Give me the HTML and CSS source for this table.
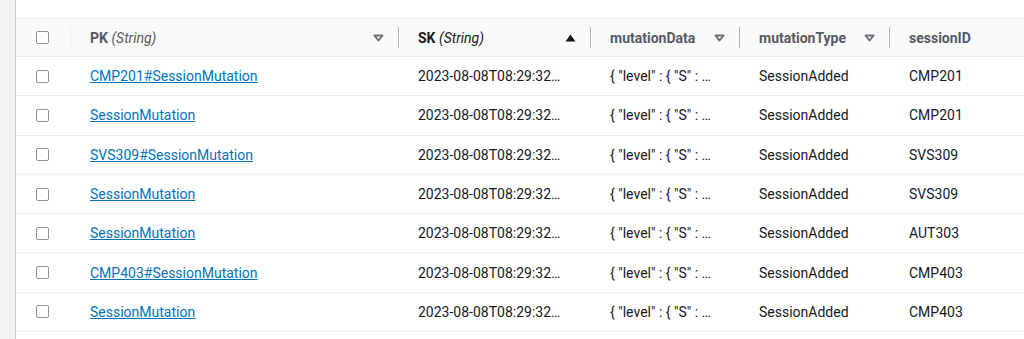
FILE: index.html
```html
<!DOCTYPE html>
<html lang="en">
<head>
  <meta charset="UTF-8">
  <title>Items returned</title>
  <link rel="stylesheet" href="styles.css">
</head>
<body>
  <div class="side"></div>
  <div class="main">
    <div class="topbar"></div>
    <table class="items">
      <colgroup>
        <col class="c-check">
        <col class="c-pk">
        <col class="c-sk">
        <col class="c-data">
        <col class="c-type">
        <col class="c-id">
      </colgroup>
      <thead>
        <tr>
          <th class="check"><span class="box"></span></th>
          <th>
            <div class="head">
              <span><b>PK</b> <i>(String)</i></span>
              <svg class="sort" width="11" height="8" viewBox="0 0 11 8"><path d="M1.5 1.5h8L5.5 6.5z" fill="none" stroke="#687078" stroke-width="2" stroke-linejoin="round"/></svg>
            </div>
          </th>
          <th class="sorted">
            <div class="head">
              <span><b>SK</b> <i>(String)</i></span>
              <svg class="sort" width="11" height="8" viewBox="0 0 11 8"><path d="M0.5 7.5h10L5.5 0.5z" fill="#16191f"/></svg>
            </div>
          </th>
          <th>
            <div class="head">
              <b>mutationData</b>
              <svg class="sort" width="11" height="8" viewBox="0 0 11 8"><path d="M1.5 1.5h8L5.5 6.5z" fill="none" stroke="#687078" stroke-width="2" stroke-linejoin="round"/></svg>
            </div>
          </th>
          <th>
            <div class="head">
              <b>mutationType</b>
              <svg class="sort" width="11" height="8" viewBox="0 0 11 8"><path d="M1.5 1.5h8L5.5 6.5z" fill="none" stroke="#687078" stroke-width="2" stroke-linejoin="round"/></svg>
            </div>
          </th>
          <th>
            <div class="head"><b>sessionID</b></div>
          </th>
        </tr>
      </thead>
      <tbody>
        <tr>
          <td class="check"><span class="box"></span></td>
          <td><a href="#">CMP201#SessionMutation</a></td>
          <td>2023-08-08T08:29:32…</td>
          <td>{ "level" : { "S" : …</td>
          <td>SessionAdded</td>
          <td>CMP201</td>
        </tr>
        <tr>
          <td class="check"><span class="box"></span></td>
          <td><a href="#">SessionMutation</a></td>
          <td>2023-08-08T08:29:32…</td>
          <td>{ "level" : { "S" : …</td>
          <td>SessionAdded</td>
          <td>CMP201</td>
        </tr>
        <tr>
          <td class="check"><span class="box"></span></td>
          <td><a href="#">SVS309#SessionMutation</a></td>
          <td>2023-08-08T08:29:32…</td>
          <td>{ "level" : { "S" : …</td>
          <td>SessionAdded</td>
          <td>SVS309</td>
        </tr>
        <tr>
          <td class="check"><span class="box"></span></td>
          <td><a href="#">SessionMutation</a></td>
          <td>2023-08-08T08:29:32…</td>
          <td>{ "level" : { "S" : …</td>
          <td>SessionAdded</td>
          <td>SVS309</td>
        </tr>
        <tr>
          <td class="check"><span class="box"></span></td>
          <td><a href="#">SessionMutation</a></td>
          <td>2023-08-08T08:29:32…</td>
          <td>{ "level" : { "S" : …</td>
          <td>SessionAdded</td>
          <td>AUT303</td>
        </tr>
        <tr>
          <td class="check"><span class="box"></span></td>
          <td><a href="#">CMP403#SessionMutation</a></td>
          <td>2023-08-08T08:29:32…</td>
          <td>{ "level" : { "S" : …</td>
          <td>SessionAdded</td>
          <td>CMP403</td>
        </tr>
        <tr>
          <td class="check"><span class="box"></span></td>
          <td><a href="#">SessionMutation</a></td>
          <td>2023-08-08T08:29:32…</td>
          <td>{ "level" : { "S" : …</td>
          <td>SessionAdded</td>
          <td>CMP403</td>
        </tr>
      </tbody>
    </table>
  </div>
</body>
</html>
```

FILE: styles.css
```css
body {
  font-family: Roboto, 'Liberation Sans', sans-serif;
  font-size: 14px;
  margin: 0;
  padding: 0;
  background-color: #fff;
  color: #16191f;
  display: flex;
  height: 339px;
  overflow: hidden;
}

.side {
  width: 15px;
  flex: none;
  background: #f2f3f3;
  border-right: 1px solid #c6cccc;
}

.main {
  flex: 1;
  min-width: 0;
}

.topbar {
  height: 18px;
  background: #fff;
  border-bottom: 1px solid #eaeded;
}

.items {
  width: 100%;
  border-collapse: collapse;
  table-layout: fixed;
}

.c-check { width: 54px; }
.c-pk { width: 328px; }
.c-sk { width: 192px; }
.c-data { width: 149px; }
.c-type { width: 150px; }

th {
  background: #fafafa;
  height: 37px;
  padding: 0;
  text-align: left;
  color: #545b64;
  font-weight: 400;
  border-bottom: 1px solid #eaeded;
  position: relative;
}

th + th::before {
  content: '';
  position: absolute;
  left: 0;
  top: 8px;
  height: 21px;
  border-left: 1px solid #aab7b8;
}

th:nth-child(2)::before {
  border-left-color: #eaeded;
}

th.sorted {
  color: #16191f;
}

.head {
  display: flex;
  align-items: center;
  justify-content: space-between;
  padding: 0 14px 0 20px;
}

.head b {
  font-weight: 700;
}

.head i {
  font-weight: 400;
}

.sort {
  display: block;
}

td {
  height: 38.3px;
  padding: 0 20px;
  border-bottom: 1px solid #eaeded;
  white-space: nowrap;
  overflow: hidden;
}

.check {
  padding: 0 0 0 20px;
}

.box {
  display: block;
  width: 11px;
  height: 11px;
  border: 1.5px solid #879596;
  border-radius: 2px;
  background: #fff;
}

a {
  color: #0073bb;
  text-decoration: underline;
}
```
